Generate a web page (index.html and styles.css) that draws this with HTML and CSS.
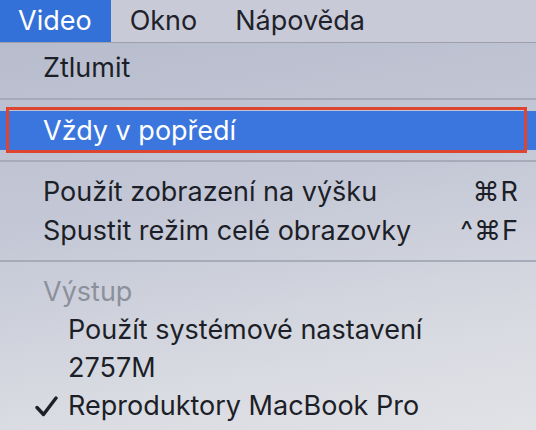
FILE: index.html
```html
<!DOCTYPE html>
<html lang="cs">
<head>
<meta charset="utf-8">
<link rel="stylesheet" href="styles.css">
</head>
<body>
<div class="screen">
  <nav class="menubar">
    <span class="mb-item active">Video</span>
    <span class="mb-item">Okno</span>
    <span class="mb-item">Nápověda</span>
  </nav>
  <div class="menu">
    <div class="row tall">Ztlumit</div>
    <div class="sep"></div>
    <div class="row tall selected"><span class="outline"></span>Vždy v popředí</div>
    <div class="sep sep-b"></div>
    <div class="row tall"><span class="label">Použít zobrazení na výšku</span><span class="key">⌘R</span></div>
    <div class="row"><span class="label">Spustit režim celé obrazovky</span><span class="key">^⌘F</span></div>
    <div class="sep sep-c"></div>
    <div class="row disabled">Výstup</div>
    <div class="row sub">Použít systémové nastavení</div>
    <div class="row sub">2757M</div>
    <div class="row sub"><svg class="check" width="23" height="21" viewBox="0 0 23 21"><path d="M2 11.5 L8.5 18.5 L21 2" fill="none" stroke="#1d2029" stroke-width="3.4" stroke-linecap="round" stroke-linejoin="round"/></svg>Reproduktory MacBook Pro</div>
  </div>
</div>
</body>
</html>
```
FILE: styles.css
```css
html, body {
  margin: 0;
  padding: 0;
}
body {
  width: 536px;
  height: 430px;
  overflow: hidden;
  font-family: Inter, "Noto Sans", sans-serif;
  color: #1c1f28;
}
.screen {
  width: 536px;
  height: 430px;
  display: flex;
  flex-direction: column;
  background: linear-gradient(170deg, #b5bacb 0%, #c4c8d6 45%, #d9dbe2 80%, #e1e2e6 100%);
}
.menubar {
  height: 42px;
  display: flex;
  align-items: stretch;
  background: #c8cbd7;
  border-bottom: 1px solid #9da1ad;
  font-size: 27px;
  color: #1f222b;
  flex: none;
}
.mb-item {
  display: flex;
  align-items: center;
  padding: 0 19px 2px 19px;
}
.mb-item.active {
  background: #3371d9;
  color: #fff;
  padding-left: 18px;
  padding-right: 19px;
}
.menu {
  position: relative;
  padding-top: 5px;
  font-size: 27px;
}
.row {
  height: 38px;
  display: flex;
  align-items: center;
  padding: 0 17px 0 43px;
  position: relative;
}
.row.tall {
  height: 39px;
}
.row .label {
  flex: 1;
}
.row .key {
  letter-spacing: 1px;
}
.sep {
  height: 2px;
  margin: 11px 0 11px;
  background: #a6abb9;
}
.sep-b {
  margin: 10px 0 10px;
}
.sep-c {
  margin: 11px 0 10px;
}
.row.selected {
  background: #3a76de;
  color: #fff;
}
.outline {
  position: absolute;
  left: 6px;
  right: 9px;
  top: -4px;
  bottom: -3px;
  border: 3px solid #dd4531;
  pointer-events: none;
}
.row.disabled {
  color: #8c909b;
}
.row.sub {
  padding-left: 68px;
}
.check {
  position: absolute;
  left: 35px;
  top: 10px;
}
```
